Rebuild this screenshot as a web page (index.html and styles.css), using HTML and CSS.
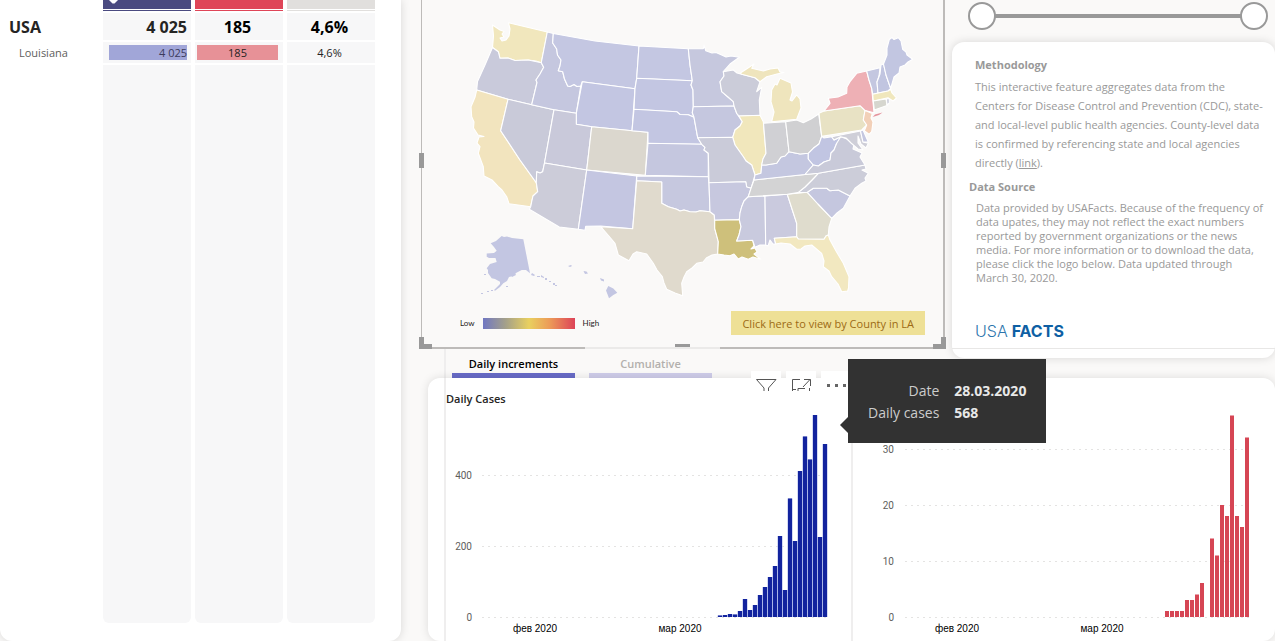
FILE: index.html
```html
<!DOCTYPE html>
<html lang="en">
<head>
<meta charset="utf-8">
<title>COVID-19 tracker</title>
<link rel="stylesheet" href="styles.css">
</head>
<body>
<section class="states-card">
  <table class="states">
    <colgroup><col class="col-name"><col><col><col></colgroup>
    <thead>
      <tr><td></td><td class="head-cases"><svg class="sort" viewBox="0 0 9 4"><path d="M0 0h9L5.500 3.500h-2z" fill="#fff"/></svg></td><td class="head-deaths"></td><td class="head-rate"></td></tr>
    </thead>
    <tbody>
      <tr class="total"><th scope="row">USA</th><td class="num">4 025</td><td>185</td><td>4,6%</td></tr>
      <tr class="state"><th scope="row">Louisiana</th><td class="num"><span class="bar bar-cases">4 025</span></td><td><span class="bar bar-deaths">185</span></td><td>4,6%</td></tr>
      <tr class="rest"><td class="blank"></td><td></td><td></td><td></td></tr>
    </tbody>
  </table>
</section>

<main class="main">
  <section class="map-panel">
    <svg class="map" viewBox="422 0 521 347" role="img" aria-label="Map of the United States">
      <g stroke="#fff" stroke-width="1.1" stroke-linejoin="round">
        <path fill="#f1e7bd" d="M492.500 25L500 30L504 31.500L502 34L504 37L500 38L502 41L506 40L509 36L510 29L508.500 22.700L547.300 32L541.300 62.700L536 61L528.300 60L515 60.500L508 58L500 58.300L498.300 51.700L492.500 47.500L493.500 36z"/>
        <path fill="#c9cadb" d="M492.500 47.500L498.300 51.700L500 58.300L508 58L515 60.500L528.300 60L541.300 62.700L543.700 67.300L540 74L536 80L537 82.500L531.700 104.700L508 99.300L476.700 90L477.500 81.500L485 65z"/>
        <path fill="#f2e4be" d="M476.700 90L508 99.300L500.700 130.700L520 160L536.300 182.700L537.700 191.700L533 196L531.700 201.700L530.700 206.700L509 203.700L506.700 196.700L502 190L498.300 186.700L492 180L484 176L483.300 166.700L478.300 153.300L480 146.700L477 143L479 137L484 136.500L478 135L473.500 128L474 122L471.700 116.700L471 106.700L475 97.300z"/>
        <path fill="#c9cad9" d="M508 99.300L531.700 104.700L554 109.700L544.500 163L542.700 171.700L540 173L536.700 171.700L536.300 182.700L520 160L500.700 130.700z"/>
        <path fill="#c5c7df" d="M547.300 32L553.300 33.500L552.700 43L556.700 49L557.500 55L561 60L560 66L558.300 70.700L562.700 71.700L564.500 79L567.700 86L570 86.500L574 84.500L577 86.500L580.700 86L576.300 113.300L554 109.700L531.700 104.700L537 82.500L536 80L540 74L543.700 67.300L541.300 62.700z"/>
        <path fill="#c4c7e2" d="M553.300 33.500L595 41L639 46L636.700 78.300L635 88.700L582.300 81.700L580.700 86L577 86.500L574 84.500L570 86.500L567.700 86L564.500 79L562.700 71.700L558.300 70.700L560 66L561 60L557.500 55L556.700 49L552.700 43z"/>
        <path fill="#c3c6e2" d="M582.300 81.700L635 88.700L632 130.700L591.700 126.700L576.300 124.300L576.300 113.300z"/>
        <path fill="#c9c9da" d="M554 109.700L576.300 113.300L576.300 124.300L591.700 126.700L586.700 170L544.500 163z"/>
        <path fill="#dbd7ce" d="M591.700 126.700L648 132.300L645.300 175.300L586.700 170z"/>
        <path fill="#ccccd9" d="M544.500 163L586.700 170L578.300 229.300L559.300 227L529.300 209.300L530.700 206.700L531.700 201.700L533 196L537.700 191.700L536.300 182.700L536.700 171.700L540 173L542.700 171.700z"/>
        <path fill="#c4c6e1" d="M586.700 170L636.700 176L632.700 228.700L600.700 226L585.700 226.300L585 230.300L578.300 229.300z"/>
        <path fill="#c4c7e2" d="M639 46L688.300 48.700L690 65L692.300 80.700L636.700 78.300z"/>
        <path fill="#c3c6e2" d="M636.700 78.300L692.300 80.700L691 85L693 90L693.300 106.700L692.300 112.700L694 117.300L688.300 114.700L680 114.500L676.700 111.700L634 109.300L635 88.700z"/>
        <path fill="#c3c6e2" d="M634 109.300L676.700 111.700L680 114.500L688.300 114.700L694 117.300L697.700 137.700L701.700 144.300L648 143.300L648 132.300L632 130.700z"/>
        <path fill="#c5c7df" d="M648 143.300L701.700 144.300L705 147.300L704 150L708.300 153.300L708.300 176.700L645.300 175.300z"/>
        <path fill="#c6c8df" d="M636.700 176L708.300 176.700L709 183.300L710 211.700L700 210.700L696 212L690 211.700L684 210L680 211L676.700 209.300L668.300 206.700L661.700 203.300L661.700 182L636.700 180.700z"/>
        <path fill="#e0dacd" d="M636.700 180.700L661.700 182L661.700 203.300L668.300 206.700L676.700 209.300L680 211L684 210L690 211.700L696 212L700 210.700L710 211.700L714.300 215L714.700 228.300L718.300 241.700L717.700 254L712 255L706.700 257.700L703 262L696.700 263.300L692 268L686.700 271.700L684 277L681.700 283.300L682.700 295.700L675 293L666.700 289.300L664 283L662.300 276.700L657 270L653.300 263.300L646.700 254L636.700 251.700L633 254L629 260.700L618.300 255L615 243.300L608 235L600.700 226.700L632.700 228.700z"/>
        <path fill="#c6c8de" d="M688.300 48.700L703.300 48.700L704 45L705.700 50.700L712 53L716 52.500L720 54.300L726 57L731 56L739.300 57.300L730 64L723.300 71.700L724 76L720 81.700L721.700 91.700L728 97L733.300 101.700L734 106L693.300 106.700L693 90L691 85L692.300 80.700L690 65z"/>
        <path fill="#c5c7df" d="M693.300 106.700L734 106L736.700 113.300L742.300 121.700L740 126L735 130L732.700 137.300L697.700 137.700L694 117.300L692.300 112.700z"/>
        <path fill="#cbccd9" d="M723.300 71.700L733.300 70L737 73L741.700 74.300L755 77.700L760 81.700L756.700 91.700L761.700 87.300L759.300 100L760 115.300L739 116L736.700 113.300L734 106L733.300 101.700L728 97L721.700 91.700L720 81.700L724 76z"/>
        <path fill="#f1e7bc" d="M739 116L760 115.300L763.300 121.700L766 153.300L763 159L761.700 165L761 173.300L755 175L751.700 165L746 161L743.300 156.700L735 145L732.700 137.300L735 130L740 126L742.300 121.700z"/>
        <path fill="#cacbd9" d="M697.700 137.700L732.700 137.300L735 145L743.300 156.700L746 161L751.700 165L755 175L753 182L751 188.300L746.700 187L745.700 181.700L709 182.700L708.300 153.300L704 150L705 147.300L701.700 144.300z"/>
        <path fill="#c7c8df" d="M709 182.700L745.700 181.700L746.700 187L751 188.300L748.300 196.700L744 201L741.700 206.700L740 213L739.300 219.600L714.700 220.300L714.300 215L710 211.700z"/>
        <path fill="#cec07b" d="M714.700 220.300L739.300 219.600L741 226.700L739 235L736.700 241L752.700 240.300L754 246L751 249L755 248L757 252L754 254L760.700 259.300L753 257L748.300 259.300L742 257L738.300 259L734 254L730 255.700L724 255L717.700 254L718.300 241.700L714.700 228.300z"/>
        <path fill="#c9cade" d="M748.300 196.700L765 196L765.700 245L760 245L755 247.300L752.700 240.300L736.700 241L739 235L741 226.700L739.300 219.600L740 213L741.700 206.700L744 201z"/>
        <path fill="#cacade" d="M765 196L787.300 194.300L793 212L796.700 223.300L796.700 236.700L774.300 238.300L775.700 244L773 244L770 240L768 246L765.700 245z"/>
        <path fill="#dfdccd" d="M787.300 194.300L807.300 192.300L818 204L831.700 218.300L829 227L828.300 235L826 236L824 239.300L798.300 239L796.700 236.700L796.700 223.300L793 212z"/>
        <path fill="#f2e8c0" d="M774.300 238.300L796.700 236.700L798.300 239L824 239.300L826 236L828.300 235L830 240L836 251L843.300 263.300L849 276.700L848.500 288L847.700 291L841.700 291.700L838 284L831.700 276.700L829 271L823.300 266.700L824 261L821.700 253.300L811.700 245L805 246L801 249L796.700 249.300L790 244L781 243L775.700 244z"/>
        <path fill="#c5c7df" d="M807.300 192.300L813.300 188.300L826.700 188.300L830 190.700L838.300 190L850 196L843.300 208.300L837 213L831.700 218.300L818 204z"/>
        <path fill="#cccdd9" d="M798 192.600L805 187L812 180L818.300 173.300L865 165L866 169L862 170L868.300 173.300L865 178L866 181L861.700 183.300L855 188.300L850 196L838.300 190L830 190.700L826.700 188.300L813.300 188.300L807.300 192.300z"/>
        <path fill="#d3d3d4" d="M754 180L763 179L805 174.500L818.300 173.300L812 180L805 187L798 192.600L787.300 194.300L748.300 196.700L751 188.300z"/>
        <path fill="#c4c7e0" d="M761 173.300L761.700 165L766 165L772 164L776.700 163.300L781 157L785 156L789 151.700L800 154L808.300 153.300L808.300 159L813.300 165L805 174.500L763 179L754 180L755 175z"/>
        <path fill="#d0d0d4" d="M763.500 123.300L785.700 121.700L789 151.700L785 156L781 157L776.700 163.300L772 164L766 165L761.700 165L763 159L766 153.300z"/>
        <path fill="#d0d0d2" d="M785.700 121.700L796.700 120L803.300 122.700L811 119L818.700 114L821.700 136.400L819 144L813.300 148.300L808.300 153.300L800 154L789 151.700z"/>
        <path fill="#efe5bd" d="M771.700 121.700L796.700 119.300L801 108L800 99L796.700 95L792 101L790 100L792.500 92L791 83L780 78.300L777 85L775 84L771.700 90L771 101.700L774 112z"/>
        <path fill="#efe5bd" d="M740 73.300L748 68L754 64L751.700 68.300L763.300 71L770 69L778 68L780 72L784 72.500L777 74L766.700 76.700L760 81.700L755 77.700L741.700 74.300z"/>
        <path fill="#c1c5e2" d="M821.700 136.400L824 138L831.700 136.700L834 140L840.700 136.700L838 143L836.700 143.300L834 150L831 153L830 160L824 162L818.300 166L813.300 165L808.300 159L808.300 153.300L813.300 148.300L819 144z"/>
        <path fill="#c9cad9" d="M805 174.500L813.300 165L818.300 166L824 162L830 160L831 153L834 150L836.700 143.300L840.700 136.700L847 139L854 144L853 149L862 153L860 157L865 165L818.300 173.300z"/>
        <path fill="#cfcfd8" d="M831.700 136.700L860.500 131L863 142L868.300 143.300L866 148L861 144L858 136L858 143L863 150L858 149L851 143L846 138L840.700 136.700L834 140z"/>
        <path fill="#c4c7e0" d="M860.500 131L863 130L868.300 142L863 142z"/>
        <path fill="#e8e2c4" d="M819 113.300L824 111L860 105.700L865 110.500L863.300 120L866.700 125L861.700 130L821.700 136.400z"/>
        <path fill="#eeb0b5" d="M824 111L830 103.300L828.300 98.300L838 97L846.700 93.300L847 87L850 81.700L856.700 73.300L866.700 71L869 80L871.700 88.300L874 112.700L865 110.500L860 105.700z"/>
        <path fill="#f2d0b8" d="M865 110.500L872.300 113.500L871 118L873 122L871.700 131.700L869 134.300L864.300 130.700L866.700 125L863.300 120z"/>
        <path fill="#c4c7e0" d="M866.700 71L880 67.700L879 76L877 82L878 93L872.700 94.300L871.700 88.300L869 80z"/>
        <path fill="#c1c5e0" d="M881 65L883.500 64L886 75L890.700 88.500L888 91L878 93L877 82L880 74z"/>
        <path fill="#c2c6e1" d="M883.500 64L887 55L887 48L889.300 39.500L892 37.500L894 39.500L898.300 37.700L901 41L902.700 49.300L906 52L907 55L912.700 59.300L908 62L905 65L900 67L899 73L894 77L890.700 88.500L886 75z"/>
        <path fill="#f0e7bd" d="M872.700 94.300L888 91L890.700 89.300L892 93L896.500 98L893 101L888 97.700L873.300 101z"/>
        <path fill="#d6d6cf" d="M873.300 101L886 99L887 105.500L874.300 110z"/>
        <path fill="#cacbd9" d="M886.500 99L889.300 98.500L889.300 103L887 105z"/>
      </g>
      <path fill="#e5939d" d="M872.700 117L875 114.500L882.500 112.500L879 115z"/>
      <g fill="#c3c6e2">
        <path d="M490.700 243.300L496 241L501.700 236L504 237L507 236.500L512 238L523.300 239.300L530 273.300L526 270L521.700 270L516 273L513 276L509 277L507 281L503.300 283.300L500 287L495 290.700L494 290L500 284L500 281.700L495 279L491.700 278.300L488 273L488 270L486.700 268.300L490 264L496.700 262L495.500 258L489 258L486.700 256.700L486.700 253.500L494 253L496.700 250.700L494 247z"/>
        <path d="M484 274h2v1h-2zM481 293h2v1h-2zM487 291h2v1h-2zM491 290h2v1h-2zM506 286h2v1h-2zM511 275l4-2 1 2-4 2zM532 273l3 2-1 1-3-1zM537 276h3v1h-3zM541 275l3 2v1l-3-1zM545 278h2v2h-2zM549 281h2v1h-2zM553 283h2v2h-2zM555 285h2v1h-2z"/>
        <path d="M568 266l3-1 1 1-2 1zM583.500 271l3 .5 1.500 2-3 .5zM600 278l4 1.500v2l-3-1zM608.300 286l5 2.500 4 4.200-4 2.300-4.300 3.300-1.500-4L606 290.500z"/>
      </g>
    </svg>
    <div class="map-footer">
      <div class="legend"><span>Low</span><span class="ramp"></span><span>High</span></div>
      <button class="county" type="button">Click here to view by County in LA</button>
    </div>
    <span class="handle handle-left"></span>
    <span class="handle handle-right"></span>
    <span class="handle handle-bottom"></span>
    <span class="corner corner-left"></span>
    <span class="corner corner-right"></span>
    <span class="edge-gap"></span>
  </section>

  <nav class="tabs">
    <button class="tab tab-on" type="button">Daily increments</button>
    <button class="tab" type="button">Cumulative</button>
  </nav>

  <aside class="side">
    <div class="range">
      <input type="range" aria-label="Start date" min="0" max="100" value="0">
      <input type="range" aria-label="End date" min="0" max="100" value="100">
    </div>
    <div class="info">
      <h2>Methodology</h2>
      <p class="method">This interactive feature aggregates data from the<br>Centers for Disease Control and Prevention (CDC), state-<br>and local-level public health agencies. County-level data<br>is confirmed by referencing state and local agencies<br>directly (<a href="#">link</a>).</p>
      <h2 class="source-title">Data Source</h2>
      <p class="source">Data provided by USAFacts. Because of the frequency of<br>data upates, they may not reflect the exact numbers<br>reported by government organizations or the news<br>media. For more information or to download the data,<br>please click the logo below. Data updated through<br>March 30, 2020.</p>
      <a class="logo" href="#">USA<b>FACTS</b></a>
    </div>
  </aside>

  <section class="charts">
    <div class="chart chart-cases">
      <h2>Daily Cases</h2>
      <svg viewBox="446 410 405 231" role="img" aria-label="Daily cases">
        <path class="grid" d="M482.500 475.500H827M482.500 546.500H827M482.500 617.500H827"/>
        <path class="bars-halo" d="M720 617V615.500M725 617V615M730 617V614M735 617V614.500M740 617V611M745 617V599M750 617V610M755 617V605M760 617V595M765 617V587M770 617V577M775 617V566M780 617V536M785 617V590M790 617V498.500M795 617V541M800 617V471M805 617V436.500M810 617V459.500M815 617V415M820 617V537M825 617V444"/>
        <path class="bars-cases" d="M720 617V615.500M725 617V615M730 617V614M735 617V614.500M740 617V611M745 617V599M750 617V610M755 617V605M760 617V595M765 617V587M770 617V577M775 617V566M780 617V536M785 617V590M790 617V498.500M795 617V541M800 617V471M805 617V436.500M810 617V459.500M815 617V415M820 617V537M825 617V444"/>
        <g class="ticks"><text x="472" y="479">400</text><text x="472" y="550">200</text><text x="472" y="621">0</text></g>
        <g class="months"><text x="535" y="632">фев 2020</text><text x="680" y="632">мар 2020</text></g>
      </svg>
    </div>
    <div class="chart chart-deaths">
      <svg viewBox="853 410 422 231" role="img" aria-label="Daily deaths">
        <path class="grid" d="M905.500 449.500H1250M905.500 505.500H1250M905.500 561.500H1250M905.500 617.500H1250"/>
        <path class="bars-deaths" d="M1167 617V611M1172 617V611M1177 617V611M1182 617V611M1187 617V600M1192 617V600M1197 617V594.500M1202 617V583M1212 617V538.500M1217 617V555.500M1222 617V505M1227 617V516M1232 617V415.500M1237 617V516M1242 617V527M1247 617V437.500"/>
        <g class="ticks"><text x="894" y="453">30</text><text x="894" y="509">20</text><text x="894" y="565">10</text><text x="894" y="621">0</text></g>
        <g class="months"><text x="957" y="632">фев 2020</text><text x="1102" y="632">мар 2020</text></g>
      </svg>
    </div>
    <div class="tools">
      <button type="button" aria-label="Filters"><svg viewBox="0 0 30 20"><path d="M5.500 8.500H25L17.500 17V20M5.500 8.500L13 17V20" /></svg></button>
      <button type="button" aria-label="Focus mode"><svg viewBox="0 0 30 20"><path d="M14 8.500H6.500V20M6.500 18.500H10M12 20V17.500H19M17 16L24 8.500M18 8.500H24.500V15M23.500 17V20"/></svg></button>
      <button type="button" aria-label="More options"><svg viewBox="0 0 30 20"><path class="dots" d="M6 13h3v3H6zM14 13h3v3h-3zM22 13h3v3h-3z"/></svg></button>
    </div>
    <dl class="tooltip">
      <dt>Date</dt><dd>28.03.2020</dd>
      <dt>Daily cases</dt><dd>568</dd>
    </dl>
  </section>
</main>
</body>
</html>
```
FILE: styles.css
```css
* { box-sizing: border-box; }

body {
  margin: 0;
  min-height: 100vh;
  display: flex;
  gap: 20px;
  overflow: hidden;
  background: #faf9f8;
  color: #252423;
  font-family: "Open Sans", "Noto Sans", sans-serif;
  font-size: 11px;
}

button { border: 0; margin: 0; font: inherit; }
h2, p, dl, dd { margin: 0; }

/* States table */
.states-card {
  flex: 0 0 401px;
  background: #fff;
  border-radius: 0 0 12px 12px;
  box-shadow: 0 0 10px rgba(0, 0, 0, 0.14);
}

.states {
  width: 379px;
  height: calc(100vh - 14px);
  margin-top: -2px;
  table-layout: fixed;
  border-collapse: separate;
  border-spacing: 4px 2px;
}

.states col { width: 88px; }
.states .col-name { width: 95px; }
.states td, .states th { padding: 0; text-align: center; }
.states thead td { height: 11px; vertical-align: top; line-height: 0; }
.states .head-cases { background: linear-gradient(#4a4a80 9px, #fff 9px, #fff 10px, #4a4a80 10px); }
.states .head-deaths { background: linear-gradient(#df4558 9px, #fff 9px, #fff 10px, #df4558 10px); }
.states .head-rate { background: linear-gradient(#e1dfdd 9px, #fff 9px, #fff 10px, #e1dfdd 10px); }
.sort { display: block; width: 9px; margin-left: 6px; }
.states tbody td { background: #f7f7f8; }
.states tbody td:not(.num) { padding-right: 3px; }
.states tbody th { text-align: left; }
.total { height: 27px; font-size: 16px; font-weight: 700; color: #000; }
.total th { padding-left: 5px; color: #252423; }
.states .total .num { text-align: right; padding-right: 4px; color: #252423; }
.state { height: 21px; color: #252423; }
.states .state th { padding-left: 15px; font-weight: 400; color: #605e5c; }
.bar { display: block; height: 15px; line-height: 15px; }
.bar-cases { margin: 0 4px 0 6px; background: #a1a6d8; text-align: right; color: #3b3b5c; }
.bar-deaths { margin: 0 2px; background: #e79197; }
.rest td { border-radius: 0 0 6px 6px; }
.states .rest .blank { background: none; }

/* Dashboard grid */
.main {
  flex: 1;
  min-width: 0;
  display: grid;
  grid-template-columns: minmax(0, 524fr) minmax(0, 323fr);
  grid-template-rows: auto auto 1fr;
  column-gap: 7px;
}

/* Map */
.map-panel {
  position: relative;
  grid-column: 1;
  grid-row: 1;
  border: solid #bdbbb9;
  border-width: 0 2px 2px 1px;
}
.map { display: block; width: 100%; }
.map-footer {
  position: absolute;
  left: 38px;
  right: 18px;
  bottom: 12px;
  display: flex;
  justify-content: space-between;
  align-items: center;
}
.legend { display: flex; align-items: center; gap: 8px; font-size: 8px; font-family: Lato, sans-serif; }
.ramp { width: 92px; height: 11px; background: linear-gradient(90deg, #7077c2, #a5a189 25%, #e9d05f 50%, #ec9c58 72%, #dd4358); }
.county { height: 24px; padding: 0 11px; background: #eee096; color: #9c6a14; font-size: 11px; }

.handle { position: absolute; background: #999; }
.handle-left { left: -3px; top: 153px; width: 5px; height: 15px; }
.handle-right { right: -3px; top: 153px; width: 5px; height: 15px; }
.handle-bottom { left: 253px; bottom: 0; width: 15px; height: 3px; }
.corner { position: absolute; bottom: -2px; width: 13px; height: 12px; border: solid #999; }
.corner-left { left: -3px; border-width: 0 0 5px 5px; }
.corner-right { right: -3px; border-width: 0 5px 5px 0; }
.edge-gap { position: absolute; left: 163px; bottom: -2px; width: 135px; height: 2px; background: #ebeae9; }

/* Tabs */
.tabs {
  grid-column: 1;
  grid-row: 2;
  display: flex;
  gap: 14px;
  margin-left: 23px;
  padding-left: 6px;
  border-left: 2px solid #efeeee;
}
.tab {
  width: 123px;
  height: 29px;
  padding: 5px 0 0;
  background: none;
  border-bottom: 5px solid #cfcdea;
  color: #b3b0ad;
  font-size: 11px;
  font-weight: 600;
}
.tab-on { border-bottom-color: #686bc7; color: #000; }

/* Side panel */
.side { grid-column: 2; grid-row: 1 / 3; }
.range { position: relative; height: 42px; margin: 0 7px 0 16px; padding-top: 14px; }
.range::before { content: ""; display: block; height: 4px; margin: 0 14px; background: #999; }
.range input {
  position: absolute;
  inset: 2px 0 auto;
  width: 100%;
  height: 28px;
  margin: 0;
  appearance: none;
  background: none;
  pointer-events: none;
}
.range input::-webkit-slider-thumb {
  appearance: none;
  width: 28px;
  height: 28px;
  border: 2px solid #999;
  border-radius: 50%;
  background: #fff;
  pointer-events: auto;
}

.info {
  height: 316px;
  padding: 16px 10px 0 23px;
  background: linear-gradient(#e8e7e6, #e8e7e6) 0 306px / 100% 1px no-repeat #fff;
  border-radius: 12px;
  box-shadow: 0 0 10px rgba(0, 0, 0, 0.14);
  color: #999;
  white-space: nowrap;
}
.info h2 { font-size: 11px; line-height: 14px; }
.info .source-title { margin: 8px 0 7px -6px; }
.method { margin-top: 5px; line-height: 19px; }
.method a { color: inherit; }
.source { margin-left: 1px; line-height: 14px; }
.logo {
  display: block;
  margin-top: 36px;
  color: #2d75ad;
  font: 300 16px/20px Inter, sans-serif;
  text-decoration: none;
}
.logo b { margin-left: 4px; color: #0e5fa4; font-weight: 700; }

/* Charts */
.charts {
  position: relative;
  grid-column: 1 / 3;
  grid-row: 3;
  display: grid;
  grid-template-columns: minmax(0, 407fr) minmax(0, 424fr);
  margin-left: 7px;
  padding-left: 16px;
  background: #fff;
  border-radius: 12px;
  box-shadow: 0 0 10px rgba(0, 0, 0, 0.12);
}
.chart { border-left: 2px solid #efeeee; }
.chart svg { display: block; width: 100%; }
.chart h2 { height: 32px; padding-top: 14px; font-size: 11px; line-height: 14px; font-weight: 600; }
.chart-deaths { padding-top: 32px; }
.grid { stroke: #c8c6c4; stroke-width: 1; stroke-dasharray: 1 5; }
.bars-cases { stroke: #12239e; stroke-width: 4; }
.bars-halo { stroke: #a9b4e8; stroke-width: 5; }
.bars-deaths { stroke: #d64554; stroke-width: 4; }
.ticks { fill: #605e5c; font: 10px Roboto, sans-serif; text-anchor: end; }
.months { fill: #000; font: 10px "Liberation Sans", sans-serif; text-anchor: middle; }

.tools { position: absolute; left: 323px; top: -7px; display: flex; gap: 5px; }
.tools button { width: 30px; height: 20px; padding: 0; background: #fff; }
.tools svg { display: block; width: 30px; fill: none; stroke: #555; stroke-width: 1; }
.tools .dots { fill: #666; stroke: none; }

.tooltip {
  position: absolute;
  left: 420px;
  top: -19px;
  display: grid;
  grid-template-columns: auto auto;
  gap: 0 15px;
  padding: 21px 20px 19px;
  background: #323232;
  color: #e8e8e8;
  font-size: 14px;
  line-height: 22px;
}
.tooltip::before {
  content: "";
  position: absolute;
  left: -8px;
  top: 58px;
  border: solid transparent;
  border-width: 8px 8px 8px 0;
  border-right-color: #323232;
}
.tooltip dt { text-align: right; color: #ccc; }
.tooltip dd { font-weight: 700; }
```
